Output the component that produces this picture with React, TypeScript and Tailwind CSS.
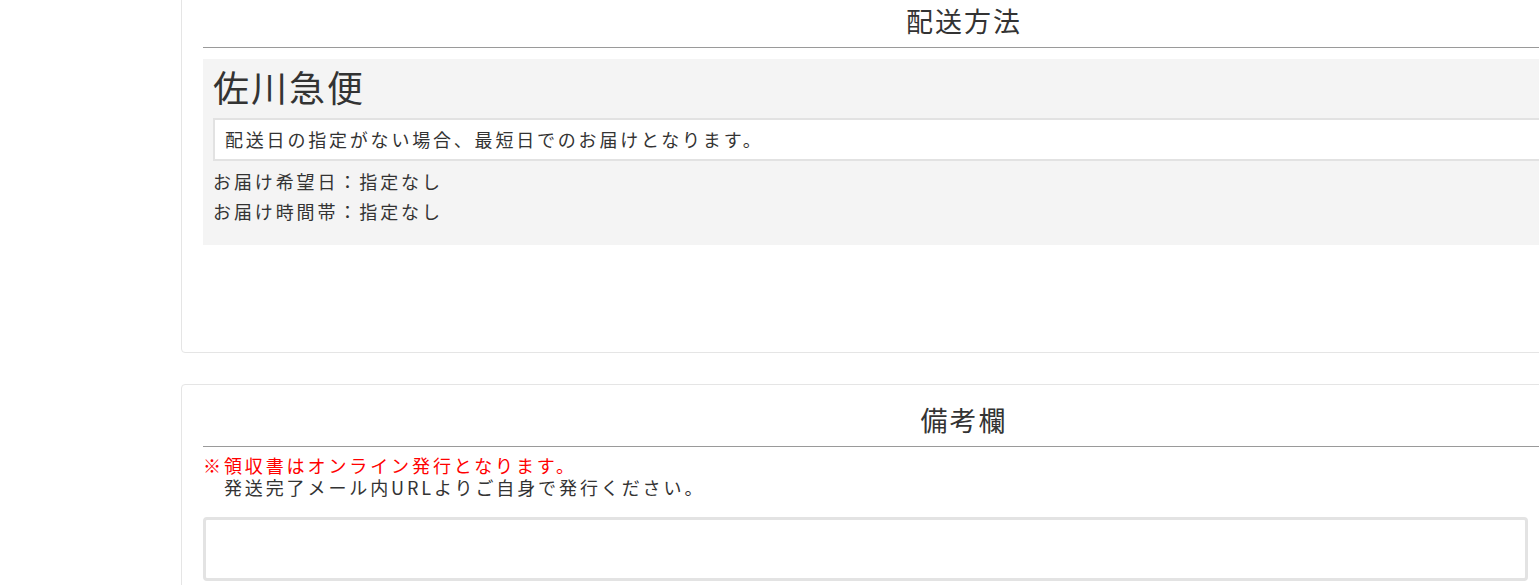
import React from "react"

const font = { fontFamily: '"Noto Sans CJK JP", "Noto Sans", sans-serif' }

function Card({ title, children, className }: { title: string; children: React.ReactNode; className?: string }) {
  return (
    <section
      className={`ml-[181px] w-[1566px] shrink-0 rounded-[4px] border border-[#e5e5e5] bg-white px-[21px] pt-[15px] ${className ?? ""}`}
    >
      <h2 className="border-b border-[#9a9a9a] pb-[7px] text-center text-[27px] leading-[39px] tracking-[2px] text-[#333]">
        {title}
      </h2>
      {children}
    </section>
  )
}

export default function App() {
  return (
    <div className="h-[585px] w-full overflow-hidden bg-white text-[#333]" style={font}>
      <div className="-mt-[15px] flex flex-col">
        <Card title="配送方法" className="pb-[107px]">
          <div className="mt-[11px] bg-[#f4f4f4] px-[10px] pt-[5px] pb-[19px]">
            <p className="text-[36px] leading-[44px] tracking-[2px] text-[#333]">佐川急便</p>
            <div className="mt-[10px] border-2 border-[#e2e2e2] bg-white px-[10px] py-[6px]">
              <p className="text-[18px] leading-[27px] tracking-[2.8px]">
                配送日の指定がない場合、最短日でのお届けとなります。
              </p>
            </div>
            <div className="mt-[5px] text-[18px] leading-[30px] tracking-[2.9px]">
              <p>お届け希望日：指定なし</p>
              <p>お届け時間帯：指定なし</p>
            </div>
          </div>
        </Card>

        <Card title="備考欄" className="mt-[31px] pb-[20px]">
          <div className="mt-[7px] text-[18px] leading-[22px] tracking-[2.9px]">
            <p className="text-[#ff0000]">※領収書はオンライン発行となります。</p>
            <p>　発送完了メール内URLよりご自身で発行ください。</p>
          </div>
          <textarea className="mt-[19px] block h-[64px] w-[1325px] resize-none rounded-[4px] border-[3px] border-[#e3e3e3] bg-white outline-none" />
        </Card>
      </div>
    </div>
  )
}
